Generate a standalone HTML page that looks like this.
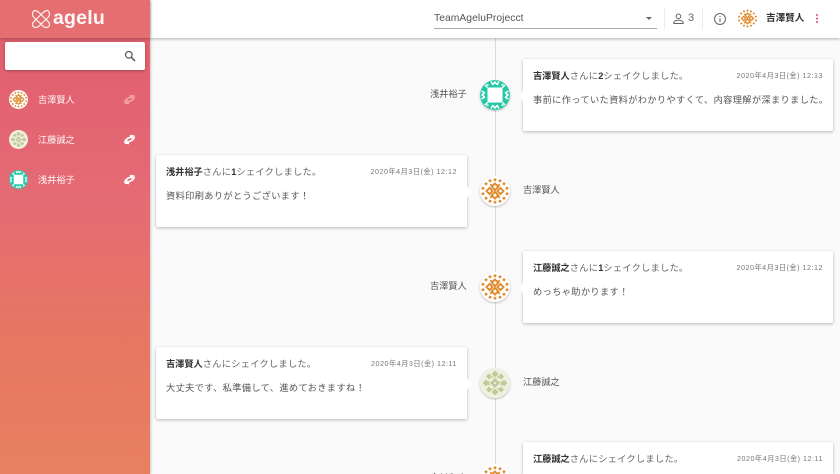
<!DOCTYPE html>
<html lang="ja">
<head>
<meta charset="utf-8">
<title>agelu</title>
<style>
*{box-sizing:border-box}
html,body{margin:0;padding:0;width:840px;height:474px;overflow:hidden;background:#fafafa;font-family:"Liberation Sans","Noto Sans CJK JP",sans-serif}
#page{position:relative;width:840px;height:474px;overflow:hidden;background:#fafafa}
.abs{position:absolute}
#side{position:absolute;left:0;top:0;width:150px;height:474px;background:linear-gradient(180deg,#e2606f 0%,#e36372 22%,#e56b74 42%,#e67762 72%,#e8805f 100%);box-shadow:1px 0 2px rgba(0,0,0,.2);z-index:3}
#sidehead{position:absolute;left:0;top:0;width:150px;height:38px;background:#e56f70;box-shadow:0 1px 3px rgba(0,0,0,.28)}
#brand{position:absolute;left:53px;top:5px;font-size:19.5px;line-height:26px;font-weight:700;color:#fff;letter-spacing:.2px;opacity:.95}
#search{position:absolute;left:5px;top:42px;width:140px;height:28px;background:#fff;border-radius:2px;box-shadow:0 1px 3px rgba(0,0,0,.3)}
.su{position:absolute;left:38px;font-size:9.2px;line-height:14px;color:#fff;white-space:nowrap;opacity:.95}
#top{position:absolute;left:150px;top:0;width:690px;height:38px;background:#fff;box-shadow:0 1px 3px rgba(0,0,0,.3);z-index:2}
#line{position:absolute;left:494.5px;top:38px;width:1px;height:436px;background:#dcdcdc}
.card{position:absolute;width:311px;height:72px;background:#fff;border-radius:2px;box-shadow:0 1px 3px rgba(0,0,0,.28)}
.card.r{left:523px;width:310px}
.card.l{left:156px}
.card:after{content:"";position:absolute;top:33px;width:8px;height:8px;background:#fff;transform:rotate(45deg)}
.card.r:after{left:-4px}
.card.l:after{right:-4px}
.card.cut{height:32px;border-radius:2px 2px 0 0}
.card.cut:after{display:none}
.t{position:absolute;left:10px;top:9.500px;font-size:9.2px;line-height:14px;color:#666;letter-spacing:.3px;white-space:nowrap}
.t b{color:#333;font-weight:700;letter-spacing:0}
.d{position:absolute;right:10px;top:10px;font-size:7.2px;line-height:13px;color:#777;letter-spacing:.5px;white-space:nowrap}
.m{position:absolute;left:10px;top:34px;font-size:9.2px;line-height:14px;color:#555;letter-spacing:.38px;white-space:nowrap}
.name{position:absolute;font-size:9.2px;line-height:14px;color:#555;white-space:nowrap}
.av{position:absolute;left:480px;width:30px;height:30px;border-radius:50%;box-shadow:0 1px 2px rgba(0,0,0,.25)}
</style>
</head>
<body>
<div id="page">
<svg width="0" height="0" style="position:absolute">
<defs>
<symbol id="orange" viewBox="0 0 30 30">
<circle cx="15" cy="15" r="15" fill="#fff"/>
<g fill="none" stroke="#e08a2c" stroke-width="1.900">
<path d="M15 7.500l3.300 3.300-3.300 3.300-3.300-3.300zM15 15.900l3.300 3.300-3.300 3.300-3.300-3.300zM9.500 12l3 3-3 3-3-3zM20.500 12l3 3-3 3-3-3z"/>
</g>
<g fill="#e08a2c">
<path d="M15 2l1.800 1.800-1.800 1.800-1.800-1.800zM10 3l1.800 1.800L10 6.600 8.200 4.800zM20 3l1.800 1.800L20 6.600l-1.800-1.800zM6 6l1.800 1.800L6 9.600 4.200 7.800zM24 6l1.800 1.800L24 9.600l-1.800-1.800zM11 7.500l1.400 1.400-1.400 1.400-1.400-1.400zM19 7.500l1.400 1.400-1.400 1.400-1.400-1.400zM3 10.500l1.800 1.800L3 14.100l-1.800-1.800zM27 10.500l1.800 1.800-1.800 1.800-1.800-1.800zM3 16l1.800 1.800L3 19.600l-1.800-1.800zM27 16l1.800 1.800-1.800 1.800-1.800-1.800zM6 20.400l1.800 1.800L6 24l-1.800-1.800zM24 20.400l1.800 1.800-1.800 1.800-1.800-1.800zM10 23.400l1.800 1.800L10 27l-1.800-1.800zM20 23.400l1.800 1.800-1.800 1.800-1.800-1.800zM15 24.400l1.800 1.800-1.800 1.800-1.800-1.800zM11 19.700l1.400 1.400-1.400 1.400-1.400-1.400zM19 19.700l1.400 1.400-1.400 1.400-1.400-1.400z"/>
</g>
</symbol>
<symbol id="olive" viewBox="0 0 30 30">
<circle cx="15" cy="15" r="15" fill="#eff1e0"/>
<g fill="#c3c898">
<path d="M15 10l5 5-5 5-5-5zM15 2.500l3.500 3.500-3.500 3.500-3.500-3.500zM15 20.500l3.500 3.500-3.500 3.500-3.500-3.500zM6 11.500L9.500 15 6 18.500 2.500 15zM24 11.500l3.500 3.500-3.500 3.500-3.500-3.500zM9 5.500l3 3-3 3-3-3zM21 5.500l3 3-3 3-3-3zM9 18.500l3 3-3 3-3-3zM21 18.500l3 3-3 3-3-3z"/>
<path d="M12.500 8.500l1 1-1 1-1-1zM17.500 8.500l1 1-1 1-1-1zM12.500 19.500l1 1-1 1-1-1zM17.500 19.500l1 1-1 1-1-1zM9 13l1 1-1 1-1-1zM21 13l1 1-1 1-1-1zM9 15.500l1 1-1 1-1-1zM21 15.500l1 1-1 1-1-1z"/>
</g>
<path d="M15 13.500l1.500 1.500-1.500 1.500-1.500-1.500z" fill="#eff1e0"/>
</symbol>
<symbol id="teal" viewBox="0 0 30 30">
<circle cx="15" cy="15" r="15" fill="#25c8a6"/>
<g fill="none" stroke="#fff" stroke-width="1.500">
<path d="M11 1.500l2 3.500M19 1.500l-2 3.500M13 4.500L15 2l2 2.500M11 28.500l2-3.500M19 28.500l-2-3.500M13 25.500l2 2.500 2-2.500M1.500 11l3.500 2M1.500 19l3.500-2M4.500 13L2 15l2.500 2M28.500 11L25 13M28.500 19L25 17M25.500 13l2.500 2-2.500 2"/>
<path d="M5 5l2.500 2.500M25 5l-2.500 2.500M5 25l2.500-2.500M25 25l-2.500-2.500M6.500 4.500l2 .5M23.500 4.500l-2 .5M6.500 25.500l2-.5M23.500 25.500l-2-.5"/>
</g>
<rect x="7.500" y="7.500" width="15" height="15" fill="#fff"/>
</symbol>
<symbol id="swap" viewBox="0 0 14 12">
<g transform="rotate(-22 7 6)">
<path d="M0 7.500C1 4.500 3.500 3.200 6.500 3.200H9V1.200L14 3.800 9 6.300V5H6.800C4.500 5 3.500 5.700 2.500 7.200Z" fill="currentColor"/>
<path d="M14 4.800C13 7.800 10.500 8.800 7.500 8.800H5V10.800L0 8.300 5 5.800V7H7.200C9.500 7 10.500 6.500 11.500 5Z" fill="currentColor"/>
</g>
</symbol>
</defs>
</svg>

<div id="line"></div>

<div class="name" style="left:430px;top:87px">浅井裕子</div>
<svg class="av" style="top:80px"><use href="#teal" width="30" height="30"/></svg>
<div class="card r" style="top:59px">
  <div class="t"><b>吉澤賢人</b>さんに<b>2</b>シェイクしました。</div>
  <div class="d">2020年4月3日(金) 12:13</div>
  <div class="m">事前に作っていた資料がわかりやすくて、内容理解が深まりました。</div>
</div>

<div class="card l" style="top:155px">
  <div class="t"><b>浅井裕子</b>さんに<b>1</b>シェイクしました。</div>
  <div class="d">2020年4月3日(金) 12:12</div>
  <div class="m">資料印刷ありがとうございます！</div>
</div>
<svg class="av" style="top:176px"><use href="#orange" width="30" height="30"/></svg>
<div class="name" style="left:523px;top:183px">吉澤賢人</div>

<div class="name" style="left:430px;top:279px">吉澤賢人</div>
<svg class="av" style="top:272px"><use href="#orange" width="30" height="30"/></svg>
<div class="card r" style="top:251px">
  <div class="t"><b>江藤誠之</b>さんに<b>1</b>シェイクしました。</div>
  <div class="d">2020年4月3日(金) 12:12</div>
  <div class="m">めっちゃ助かります！</div>
</div>

<div class="card l" style="top:347px">
  <div class="t"><b>吉澤賢人</b>さんにシェイクしました。</div>
  <div class="d">2020年4月3日(金) 12:11</div>
  <div class="m">大丈夫です、私準備して、進めておきますね！</div>
</div>
<svg class="av" style="top:368px"><use href="#olive" width="30" height="30"/></svg>
<div class="name" style="left:523px;top:375px">江藤誠之</div>

<div class="name" style="left:430px;top:471px;height:3px;overflow:hidden">今村和寛</div>
<svg class="av" style="top:464px;height:10px;border-radius:15px 15px 0 0;box-shadow:none"><use href="#orange" width="30" height="30"/></svg>
<div class="card r cut" style="top:442px">
  <div class="t"><b>江藤誠之</b>さんにシェイクしました。</div>
  <div class="d">2020年4月3日(金) 12:11</div>
</div>

<div id="top">
  <div class="abs" style="left:284px;top:11.500px;font-size:10.300px;line-height:14px;color:#555;letter-spacing:.05px">TeamAgeluProjecct</div>
  <div class="abs" style="left:284px;top:28px;width:223px;height:1px;background:#aaa"></div>
  <div class="abs" style="left:496px;top:17px;width:0;height:0;border-left:3.500px solid transparent;border-right:3.500px solid transparent;border-top:3.500px solid #666"></div>
  <div class="abs" style="left:514px;top:8px;width:1px;height:22px;background:#eee"></div>
  <svg class="abs" style="left:522px;top:13px" width="13" height="12" viewBox="0 0 13 12" fill="none" stroke="#666" stroke-width="1"><circle cx="6.500" cy="3.300" r="2.300"/><path d="M1.800 10.500V9.500C1.800 8 4.500 7.300 6.500 7.300S11.200 8 11.200 9.500V10.500Z"/></svg>
  <div class="abs" style="left:538px;top:11px;font-size:11px;line-height:14px;color:#666">3</div>
  <div class="abs" style="left:552px;top:8px;width:1px;height:22px;background:#eee"></div>
  <svg class="abs" style="left:563px;top:12px" width="14" height="14" viewBox="0 0 14 14" fill="none" stroke="#666" stroke-width="1"><circle cx="7" cy="7" r="5.500"/><path d="M7 6.300V10M7 4V5" stroke-width="1.100"/></svg>
  <svg class="abs" style="left:587px;top:8px" width="21" height="21"><use href="#orange" width="21" height="21"/></svg>
  <div class="abs" style="left:616px;top:11.500px;font-size:9.600px;line-height:14px;font-weight:700;color:#333;white-space:nowrap">吉澤賢人</div>
  <div class="abs" style="left:665.500px;top:14px;width:2px;height:2px;border-radius:50%;background:#e0457b;box-shadow:0 3.500px 0 #e0457b,0 7px 0 #e0457b"></div>
</div>

<div id="side">
  <div id="sidehead">
    <svg class="abs" style="left:31px;top:9px" width="20" height="20" viewBox="0 0 20 20" fill="none" stroke="#fff" stroke-width="1.200" opacity=".9"><path d="M4 1.500C6 1.500 7.500 3 10 5.500L15 10.500C17 12.500 19 14 18.500 16 18 18 16.500 18.500 15 18.500 13 18.500 11.500 17 10 15L5 10.500C3 8.500 1 7 1.500 4.500 2 2.500 3 1.500 4 1.500Z"/><path d="M16 1.500C14 1.500 12.500 3 10 5.500L5 10.500C3 12.500 1 14 1.500 16 2 18 3.500 18.500 5 18.500 7 18.500 8.500 17 10 15L15 10.500C17 8.500 19 7 18.500 4.500 18 2.500 17 1.500 16 1.500Z"/></svg>
    <div id="brand">agelu</div>
  </div>
  <div id="search">
    <svg class="abs" style="left:119px;top:8px" width="12" height="12" viewBox="0 0 12 12" fill="none" stroke="#555" stroke-width="1.200"><circle cx="4.800" cy="4.800" r="3.300"/><path d="M7.300 7.300L11 11" stroke-width="1.500"/></svg>
  </div>

  <svg class="abs" style="left:9px;top:90px" width="19" height="19"><use href="#orange" width="19" height="19"/></svg>
  <div class="su" style="top:93px">吉澤賢人</div>
  <svg class="abs" style="left:123px;top:94px;color:#f3a0a5" width="13" height="11"><use href="#swap" width="13" height="11"/></svg>

  <svg class="abs" style="left:9px;top:130px" width="19" height="19"><use href="#olive" width="19" height="19"/></svg>
  <div class="su" style="top:133px">江藤誠之</div>
  <svg class="abs" style="left:123px;top:134px;color:#fff" width="13" height="11"><use href="#swap" width="13" height="11"/></svg>

  <svg class="abs" style="left:9px;top:170px" width="19" height="19"><use href="#teal" width="19" height="19"/></svg>
  <div class="su" style="top:173px">浅井裕子</div>
  <svg class="abs" style="left:123px;top:174px;color:#fff" width="13" height="11"><use href="#swap" width="13" height="11"/></svg>
</div>
</div>
</body>
</html>
